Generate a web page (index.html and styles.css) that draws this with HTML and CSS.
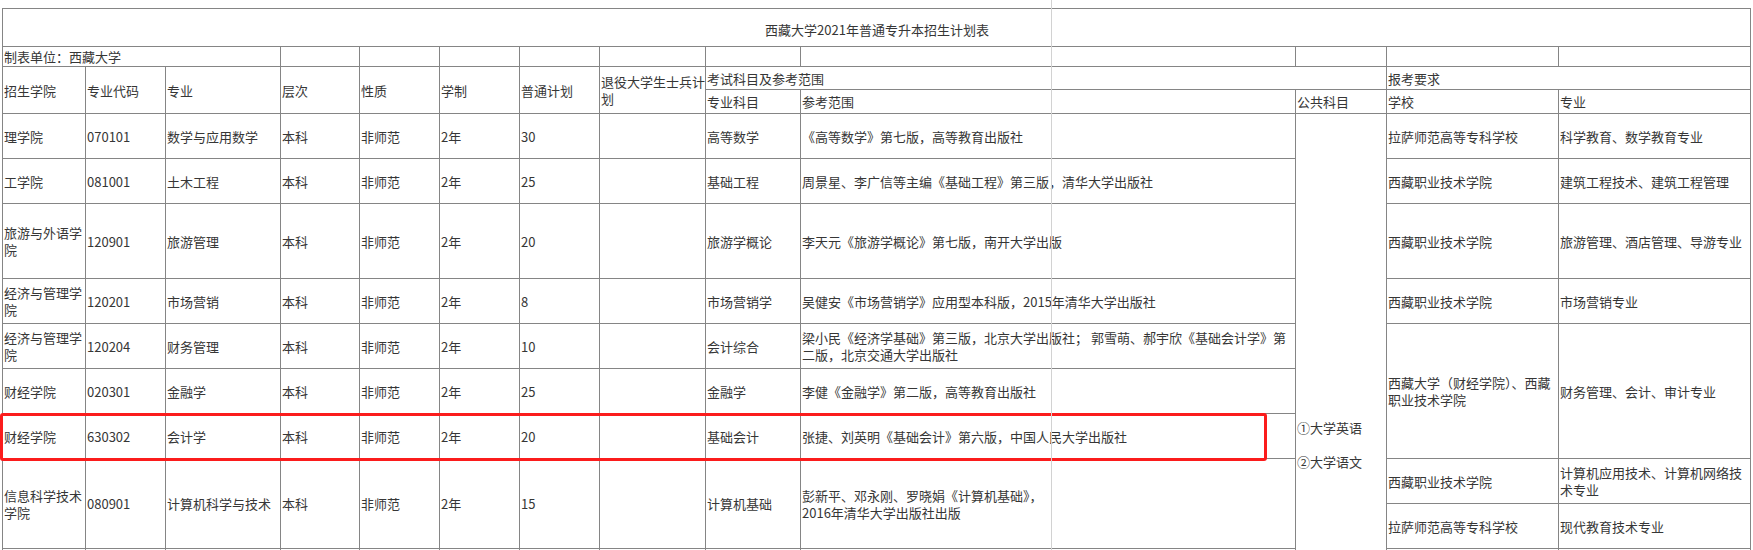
FILE: index.html
```html
<!DOCTYPE html>
<html lang="zh-CN">
<head>
<meta charset="utf-8">
<title>西藏大学2021年普通专升本招生计划表</title>
<link rel="stylesheet" href="styles.css">
</head>
<body>
<div class="page">
  <table class="plan">
    <colgroup>
      <col class="w-college"><col class="w-code"><col class="w-major"><col class="w-level"><col class="w-type"><col class="w-years"><col class="w-plan"><col class="w-vet"><col class="w-subject"><col class="w-ref"><col class="w-public"><col class="w-school"><col class="w-req">
    </colgroup>
    <tr class="r-title"><td colspan="13" class="title">西藏大学2021年普通专升本招生计划表</td></tr>
    <tr class="r-unit"><td colspan="3">制表单位：西藏大学</td><td></td><td></td><td></td><td></td><td></td><td></td><td></td><td></td><td></td><td></td></tr>
    <tr class="r-head1">
      <td rowspan="2">招生学院</td><td rowspan="2">专业代码</td><td rowspan="2">专业</td><td rowspan="2">层次</td><td rowspan="2">性质</td><td rowspan="2">学制</td><td rowspan="2">普通计划</td><td rowspan="2">退役大学生士兵计划</td>
      <td colspan="3">考试科目及参考范围</td><td colspan="2">报考要求</td>
    </tr>
    <tr class="r-head2"><td>专业科目</td><td>参考范围</td><td>公共科目</td><td>学校</td><td>专业</td></tr>
    <tr class="r-row">
      <td>理学院</td><td>070101</td><td>数学与应用数学</td><td>本科</td><td>非师范</td><td>2年</td><td>30</td><td></td><td>高等数学</td><td>《高等数学》第七版，高等教育出版社</td>
      <td rowspan="10" class="public"><span class="line">①大学英语</span><span class="line gap">②大学语文</span></td>
      <td>拉萨师范高等专科学校</td><td>科学教育、数学教育专业</td>
    </tr>
    <tr class="r-row">
      <td>工学院</td><td>081001</td><td>土木工程</td><td>本科</td><td>非师范</td><td>2年</td><td>25</td><td></td><td>基础工程</td><td>周景星、李广信等主编《基础工程》第三版，清华大学出版社</td>
      <td>西藏职业技术学院</td><td>建筑工程技术、建筑工程管理</td>
    </tr>
    <tr class="r-tall">
      <td>旅游与外语学院</td><td>120901</td><td>旅游管理</td><td>本科</td><td>非师范</td><td>2年</td><td>20</td><td></td><td>旅游学概论</td><td>李天元《旅游学概论》第七版，南开大学出版</td>
      <td>西藏职业技术学院</td><td>旅游管理、酒店管理、导游专业</td>
    </tr>
    <tr class="r-row">
      <td>经济与管理学院</td><td>120201</td><td>市场营销</td><td>本科</td><td>非师范</td><td>2年</td><td>8</td><td></td><td>市场营销学</td><td>吴健安《市场营销学》应用型本科版，2015年清华大学出版社</td>
      <td>西藏职业技术学院</td><td>市场营销专业</td>
    </tr>
    <tr class="r-row">
      <td>经济与管理学院</td><td>120204</td><td>财务管理</td><td>本科</td><td>非师范</td><td>2年</td><td>10</td><td></td><td>会计综合</td><td>梁小民《经济学基础》第三版，北京大学出版社； 郭雪萌、郝宇欣《基础会计学》第二版，北京交通大学出版社</td>
      <td rowspan="3">西藏大学（财经学院）、西藏职业技术学院</td><td rowspan="3">财务管理、会计、审计专业</td>
    </tr>
    <tr class="r-row">
      <td>财经学院</td><td>020301</td><td>金融学</td><td>本科</td><td>非师范</td><td>2年</td><td>25</td><td></td><td>金融学</td><td>李健《金融学》第二版，高等教育出版社</td>
    </tr>
    <tr class="r-row">
      <td>财经学院</td><td>630302</td><td>会计学</td><td>本科</td><td>非师范</td><td>2年</td><td>20</td><td></td><td>基础会计</td><td>张捷、刘英明《基础会计》第六版，中国人民大学出版社</td>
    </tr>
    <tr class="r-row">
      <td rowspan="2">信息科学技术学院</td><td rowspan="2">080901</td><td rowspan="2">计算机科学与技术</td><td rowspan="2">本科</td><td rowspan="2">非师范</td><td rowspan="2">2年</td><td rowspan="2">15</td><td rowspan="2"></td><td rowspan="2">计算机基础</td><td rowspan="2">彭新平、邓永刚、罗晓娟《计算机基础》，<br>2016年清华大学出版社出版</td>
      <td>西藏职业技术学院</td><td>计算机应用技术、计算机网络技术专业</td>
    </tr>
    <tr class="r-row">
      <td>拉萨师范高等专科学校</td><td>现代教育技术专业</td>
    </tr>
    <tr class="r-more">
      <td></td><td></td><td></td><td></td><td></td><td></td><td></td><td></td><td></td><td></td><td></td><td></td>
    </tr>
  </table>
  <div class="mark"></div>
  <div class="guide"></div>
</div>
</body>
</html>
```
FILE: styles.css
```css
html, body {
  margin: 0;
  padding: 0;
  background: #fff;
  overflow: hidden;
}

.page {
  position: relative;
  width: 1753px;
  height: 550px;
  overflow: hidden;
}

.plan {
  margin: 8px 0 0 2px;
  width: 1748px;
  table-layout: fixed;
  border-collapse: collapse;
  border: 1px solid #222;
  font-family: "Noto Sans CJK SC", "Microsoft YaHei", sans-serif;
  font-size: 13px;
  line-height: 17px;
  color: #363636;
}

.plan td {
  border: 1px solid #858585;
  padding: 0 0 0 1px;
  vertical-align: middle;
  text-align: left;
  overflow: hidden;
}

.w-college { width: 83px; }
.w-code { width: 80px; }
.w-major { width: 115px; }
.w-level { width: 79px; }
.w-type { width: 80px; }
.w-years { width: 80px; }
.w-plan { width: 80px; }
.w-vet { width: 106px; }
.w-subject { width: 95px; }
.w-ref { width: 495px; }
.w-public { width: 91px; }
.w-school { width: 172px; }
.w-req { width: 192px; }

.r-title td { height: 34px; }
.plan td.title {
  text-align: center;
  padding-top: 3px;
}
.r-unit td { height: 19px; }
.r-head1 td { height: 22px; }
.r-head2 td { height: 23px; }
.r-row td { height: 44px; }
.r-tall td { height: 74px; }
.r-more td { height: 226px; }

.line {
  display: block;
  height: 17px;
  white-space: nowrap;
}
.line.gap { margin-top: 17px; }

.mark {
  position: absolute;
  left: 0;
  top: 413px;
  width: 1261px;
  height: 42px;
  border: 3px solid #fb1c1c;
  border-radius: 3px;
}

.guide {
  position: absolute;
  left: 1051px;
  top: 0;
  width: 1px;
  height: 550px;
  background: #d2d2d2;
}
```
